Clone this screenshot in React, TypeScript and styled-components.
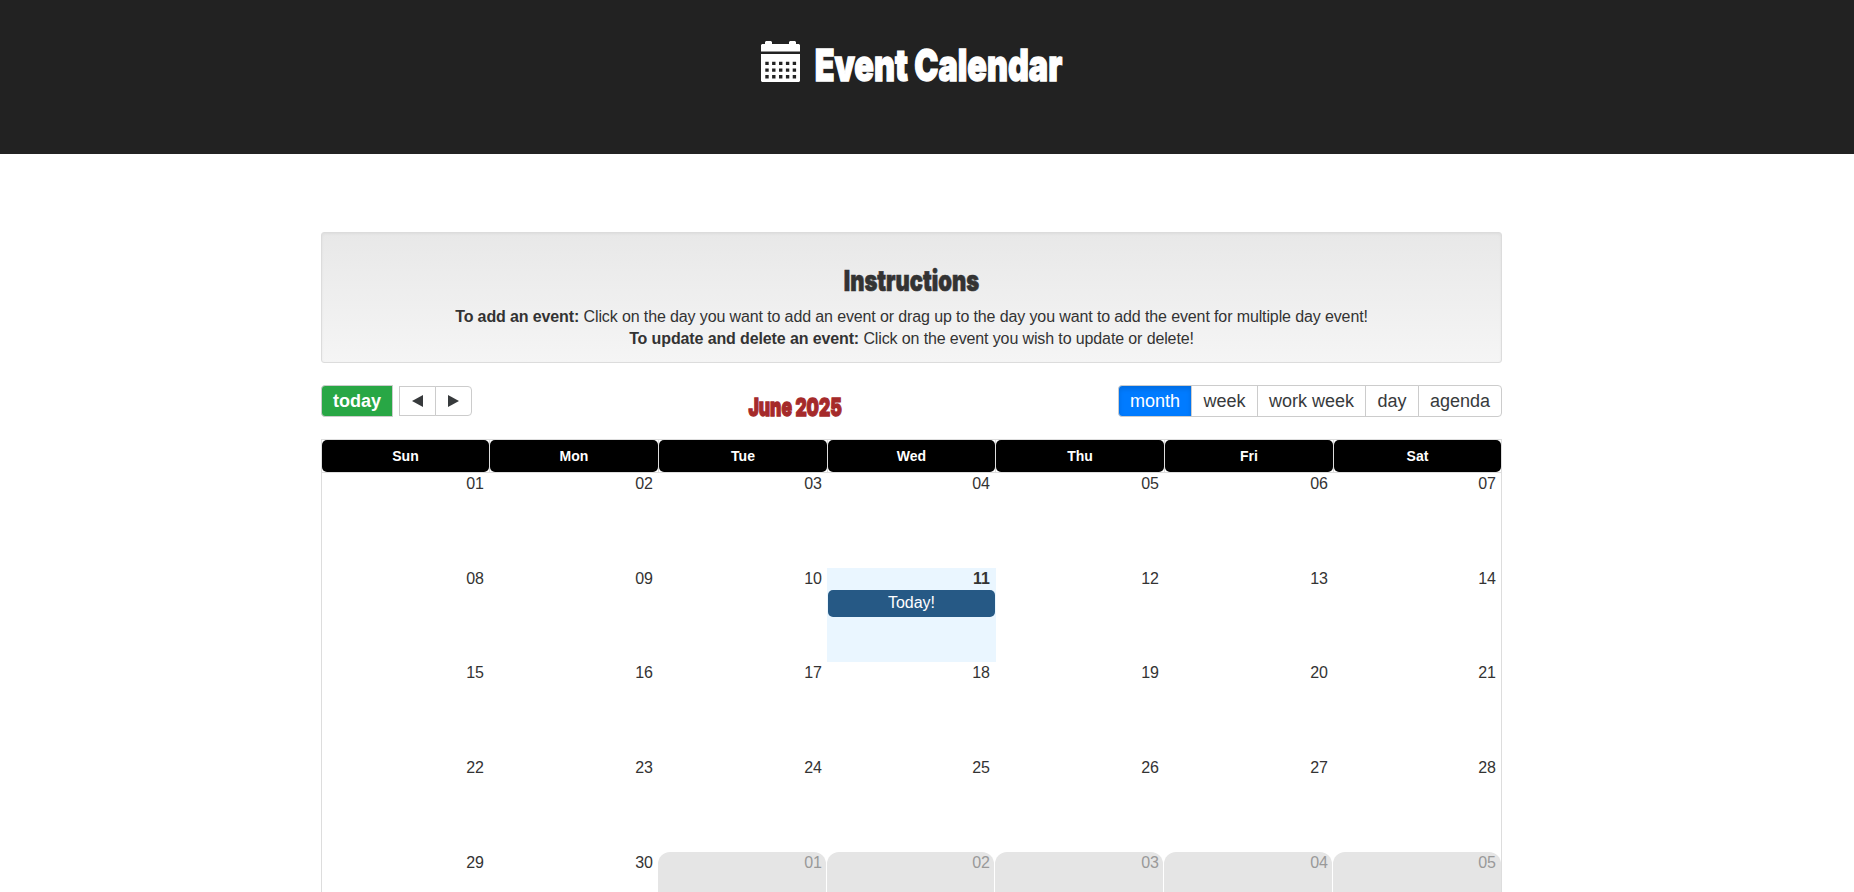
import React from 'react';
import styled, { createGlobalStyle } from 'styled-components';

const GlobalStyle = createGlobalStyle`
  *, *::before, *::after { box-sizing: border-box; }
  body {
    margin: 0;
    background: #fff;
    color: #333;
    font: 16px/22px "Liberation Sans", Arial, sans-serif;
  }
`;

const Page = styled.div`
  height: 892px;
  overflow: hidden;
`;

const Header = styled.header`
  height: 154px;
  padding: 41px 31px 0 0;
  display: flex;
  justify-content: center;
  align-items: flex-start;
  background: #222;
  color: #fff;
`;

const CalendarIcon = styled.svg`
  flex: none;
  width: 39px;
  height: 41px;
  margin-right: 14px;
`;

const Display = styled.span<{ $size: number; $scale: number; $stroke: number }>`
  display: block;
  font-family: Inter, sans-serif;
  font-weight: 900;
  font-size: ${p => p.$size}px;
  line-height: 1;
  white-space: nowrap;
  -webkit-text-stroke: ${p => p.$stroke}px currentColor;
  transform: scaleX(${p => p.$scale});
`;

const Title = styled.h1`
  width: 248px;
  margin: 2px 0 0;
  display: flex;
  justify-content: center;
`;

const Main = styled.main`
  width: 1181px;
  margin: 78px 0 0 321px;
`;

const Well = styled.section`
  height: 131px;
  padding-top: 33px;
  border: 1px solid #dcdcdc;
  border-radius: 3px;
  background: linear-gradient(#e8e8e8, #f5f5f5);
  box-shadow: inset 0 1px 3px rgba(0, 0, 0, 0.05);
  text-align: center;
`;

const WellTitle = styled.h2`
  height: 29px;
  margin: 0 0 11px;
  display: flex;
  justify-content: center;
`;

const Instruction = styled.p`
  margin: 0;
  letter-spacing: -0.12px;
`;

const Toolbar = styled.div`
  height: 32px;
  margin: 22px 0;
  display: flex;
  align-items: center;
`;

const Group = styled.div`
  display: flex;
  align-items: center;
`;

const Button = styled.button<{ $w: number; $kind?: 'today' | 'active' | 'arrow' }>`
  width: ${p => p.$w}px;
  height: ${p => (p.$kind === 'arrow' ? 30 : 32)}px;
  padding: 0 0 1px;
  border: 1px solid #ccc;
  background: ${p => (p.$kind === 'today' ? '#28a745' : p.$kind === 'active' ? '#007bff' : '#fff')};
  color: ${p => (p.$kind === 'today' || p.$kind === 'active' ? '#fff' : '#373a3c')};
  font: ${p => (p.$kind === 'today' ? 'bold' : 'normal')} 18px/28px "Liberation Sans", Arial, sans-serif;
  box-shadow: ${p => (p.$kind === 'active' ? 'inset 0 3px 5px rgba(0, 0, 0, 0.125)' : 'none')};
  & + & { margin-left: -1px; }
  &:first-child { border-radius: 4px 0 0 4px; }
  &:last-child { border-radius: 0 4px 4px 0; }
`;

const TodayButton = styled(Button)`
  margin-right: 7px;
`;

const Arrow = styled.svg`
  display: block;
  width: 11px;
  height: 12px;
  margin: 1px auto 0;
  fill: currentColor;
`;

const MonthLabel = styled.div`
  flex: 1;
  min-width: 0;
  padding-top: 12px;
  display: flex;
  justify-content: center;
  color: #a52a2a;
`;

const MonthView = styled.div`
  height: 508px;
  border: 1px solid #ddd;
`;

const columns = '167fr 169fr 169fr 168fr 169fr 169fr 168fr';

const HeaderRow = styled.div`
  display: grid;
  grid-template-columns: ${columns};
  height: 33px;
  border-bottom: 1px solid #ddd;
`;

const HeaderSlot = styled.div`
  & + & { border-left: 1px solid #ddd; }
`;

const HeaderCell = styled.div`
  height: 32px;
  border-radius: 5px;
  background: #000;
  color: #fff;
  text-align: center;
  font: bold 14px/32px "Liberation Sans", Arial, sans-serif;
`;

const Week = styled.div`
  display: grid;
  grid-template-columns: ${columns};
  height: 94.7px;
`;

const Day = styled.div<{ $today: boolean; $off: boolean }>`
  background: ${p => (p.$today ? '#eaf6ff' : p.$off ? '#e5e5e5' : 'transparent')};
  color: ${p => (p.$off ? '#999' : '#333')};
  border-radius: ${p => (p.$off ? '12px 12px 0 0' : '0')};
  margin-right: ${p => (p.$off ? '1px' : p.$today ? '-1px' : '0')};
  &:last-child { margin-right: 0; }
`;

const DayNumber = styled.div<{ $bold: boolean; $off: boolean }>`
  height: 22px;
  padding-right: ${p => (p.$off ? 4 : p.$bold ? 6 : 5)}px;
  text-align: right;
  font-weight: ${p => (p.$bold ? 700 : 400)};
  ${Day}:last-child > & { padding-right: 5px; }
`;

const Event = styled.div`
  height: 27px;
  margin: 0 1px;
  border-radius: 5px;
  background: #265985;
  color: #fff;
  text-align: center;
  line-height: 25px;
`;

const names = ['Sun', 'Mon', 'Tue', 'Wed', 'Thu', 'Fri', 'Sat'];
const views: [string, number][] = [['month', 74], ['week', 67], ['work week', 109], ['day', 54], ['agenda', 84]];
const weeks = [0, 1, 2, 3, 4].map(w =>
  names.map((_, d) => {
    const n = w * 7 + d + 1;
    return { n: n > 30 ? n - 30 : n, off: n > 30 };
  })
);

export default function App() {
  return (
    <Page>
      <GlobalStyle />
      <Header>
        <CalendarIcon viewBox="0 0 39 41" fill="#fff">
          <path d="M4 3V1L5 0H10L11 1V3H28V1L29 0H34L35 1V3H38L39 4V10.5H0V4L1 3Z" />
          <path
            fillRule="evenodd"
            d={
              'M0 13H39V40L38 41H1L0 40Z' +
              [20.7, 27.4, 34]
                .map(y => [4.3, 11.1, 18, 24.9, 31.7].map(x => `M${x} ${y}h3.4v3.4h-3.4z`).join(''))
                .join('')
            }
          />
        </CalendarIcon>
        <Title><Display $size={44} $scale={0.735} $stroke={1.4}>Event Calendar</Display></Title>
      </Header>
      <Main>
        <Well>
          <WellTitle><Display $size={29} $scale={0.757} $stroke={0.7}>Instructions</Display></WellTitle>
          <Instruction><strong>To add an event:</strong> Click on the day you want to add an event or drag up to the day you want to add the event for multiple day event!</Instruction>
          <Instruction><strong>To update and delete an event:</strong> Click on the event you wish to update or delete!</Instruction>
        </Well>
        <Toolbar>
          <Group>
            <TodayButton $w={72} $kind="today">today</TodayButton>
            <Button $w={37} $kind="arrow" aria-label="Back"><Arrow viewBox="0 0 11 12"><path d="M0 6L11 0V12Z" /></Arrow></Button>
            <Button $w={37} $kind="arrow" aria-label="Next"><Arrow viewBox="0 0 11 12"><path d="M11 6L0 0V12Z" /></Arrow></Button>
          </Group>
          <MonthLabel><Display $size={25} $scale={0.695} $stroke={1.3}>June 2025</Display></MonthLabel>
          <Group>
            {views.map(([v, w], i) => (
              <Button key={v} $w={w} $kind={i === 0 ? 'active' : undefined}>{v}</Button>
            ))}
          </Group>
        </Toolbar>
        <MonthView>
          <HeaderRow>
            {names.map(n => <HeaderSlot key={n}><HeaderCell>{n}</HeaderCell></HeaderSlot>)}
          </HeaderRow>
          {weeks.map((week, w) => (
            <Week key={w}>
              {week.map(({ n, off }) => {
                const today = n === 11;
                return (
                  <Day key={n} $today={today} $off={off}>
                    <DayNumber $bold={today} $off={off}>{String(n).padStart(2, '0')}</DayNumber>
                    {today && <Event>Today!</Event>}
                  </Day>
                );
              })}
            </Week>
          ))}
        </MonthView>
      </Main>
    </Page>
  );
}
